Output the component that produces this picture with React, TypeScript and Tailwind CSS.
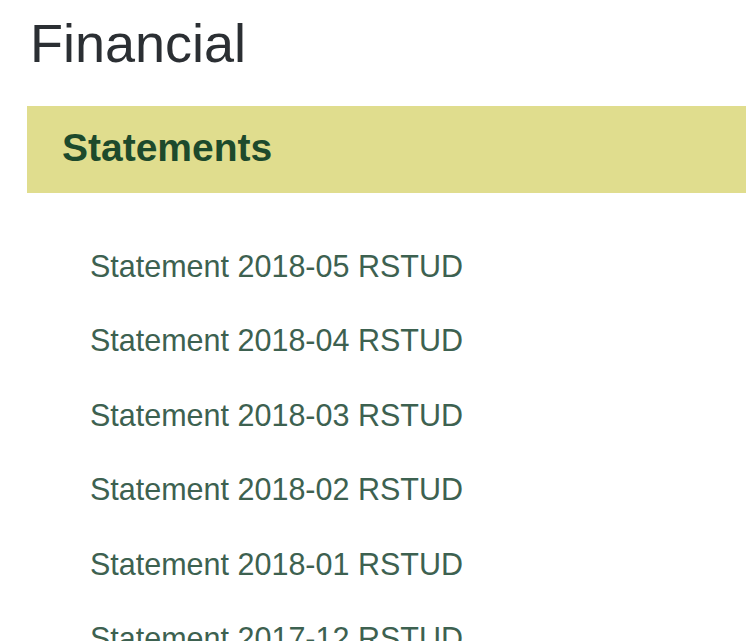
export default function App() {
  const rows = [
    "Statement 2018-05 RSTUD",
    "Statement 2018-04 RSTUD",
    "Statement 2018-03 RSTUD",
    "Statement 2018-02 RSTUD",
    "Statement 2018-01 RSTUD",
    "Statement 2017-12 RSTUD",
  ];
  return (
    <div
      className="w-[746px] h-[641px] overflow-hidden bg-white"
      style={{ fontFamily: '"Liberation Sans", Arial, sans-serif' }}
    >
      <h1 className="pl-[30px] pt-[16px] text-[54px] leading-[54px] text-[#2b2f33] font-normal">
        Financial
      </h1>
      <div className="ml-[27px] mt-[36px] h-[87px] bg-[#e0dd8e] pl-[62px] pt-[22px]">
        <h2 className="-ml-[27px] text-[39px] leading-[39px] font-bold text-[#1d4a2c]">
          Statements
        </h2>
      </div>
      <div className="pl-[90px] pt-[58px] flex flex-col gap-[44.4px]">
        {rows.map((r) => (
          <div key={r} className="text-[30.5px] leading-[30px] text-[#3d6150] whitespace-nowrap">
            {r}
          </div>
        ))}
      </div>
    </div>
  );
}
